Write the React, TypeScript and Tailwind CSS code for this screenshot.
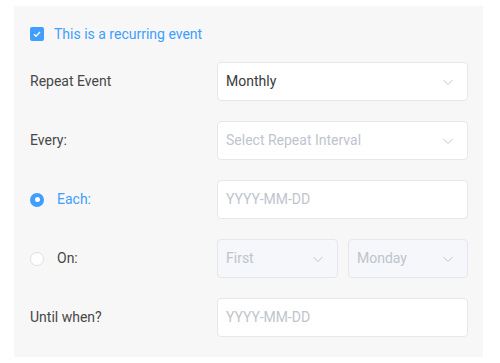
import React from "react";

const Chevron = () => (
  <svg width="12" height="12" viewBox="0 0 12 12" fill="none" className="shrink-0">
    <path d="M1.5 4l4.5 4.5L10.5 4" stroke="#c0c4cc" strokeWidth="1" />
  </svg>
);

const Select = ({ value, placeholder, disabled, className = "" }: { value?: string; placeholder?: string; disabled?: boolean; className?: string }) => (
  <div
    className={`h-[39px] flex items-center justify-between pl-[8px] pr-[13px] rounded border border-[#e4e7ed] ${disabled ? "bg-[#f5f7fa]" : "bg-white"} ${className}`}
  >
    <span className={value ? "text-[#3a3a3a]" : "text-[#c0c4cc]"}>{value ?? placeholder}</span>
    <Chevron />
  </div>
);

const Input = ({ placeholder }: { placeholder: string }) => (
  <div className="h-[39px] flex items-center pl-[8px] rounded border border-[#e4e7ed] bg-white">
    <span className="text-[#c0c4cc]">{placeholder}</span>
  </div>
);

export default function App() {
  return (
    <div className="w-[500px] h-[363px] bg-white pt-[6px] pl-[14px] font-['Roboto',sans-serif] text-[14px]">
      <div className="w-[469px] h-[351px] bg-[#f7f7f7] pl-4 pr-[15px] pt-[21px]">
        <div className="flex items-center h-[14px] gap-[10px]">
          <div className="w-[14px] h-[14px] rounded-[2px] bg-[#409eff] flex items-center justify-center">
            <svg width="10" height="10" viewBox="0 0 10 10" fill="none">
              <path d="M2 5.2l2 2L8 3" stroke="white" strokeWidth="1.4" />
            </svg>
          </div>
          <span className="text-[#409eff]">This is a recurring event</span>
        </div>
        <div className="mt-[21px] grid grid-cols-[187px_1fr] gap-y-[20px] items-center text-[#474747]">
          <span>Repeat Event</span>
          <Select value="Monthly" />
          <span>Every:</span>
          <Select placeholder="Select Repeat Interval" />
          <div className="flex items-center gap-[13px]">
            <div className="w-[14px] h-[14px] rounded-full bg-[#409eff] flex items-center justify-center">
              <div className="w-[5px] h-[5px] rounded-full bg-white" />
            </div>
            <span className="text-[#409eff]">Each:</span>
          </div>
          <Input placeholder="YYYY-MM-DD" />
          <div className="flex items-center gap-[13px]">
            <div className="w-[14px] h-[14px] rounded-full bg-white border border-[#dcdfe6]" />
            <span>On:</span>
          </div>
          <div className="flex gap-[10px]">
            <Select placeholder="First" disabled className="w-[121px]" />
            <Select placeholder="Monday" disabled className="flex-1" />
          </div>
          <span>Until when?</span>
          <Input placeholder="YYYY-MM-DD" />
        </div>
      </div>
    </div>
  );
}
